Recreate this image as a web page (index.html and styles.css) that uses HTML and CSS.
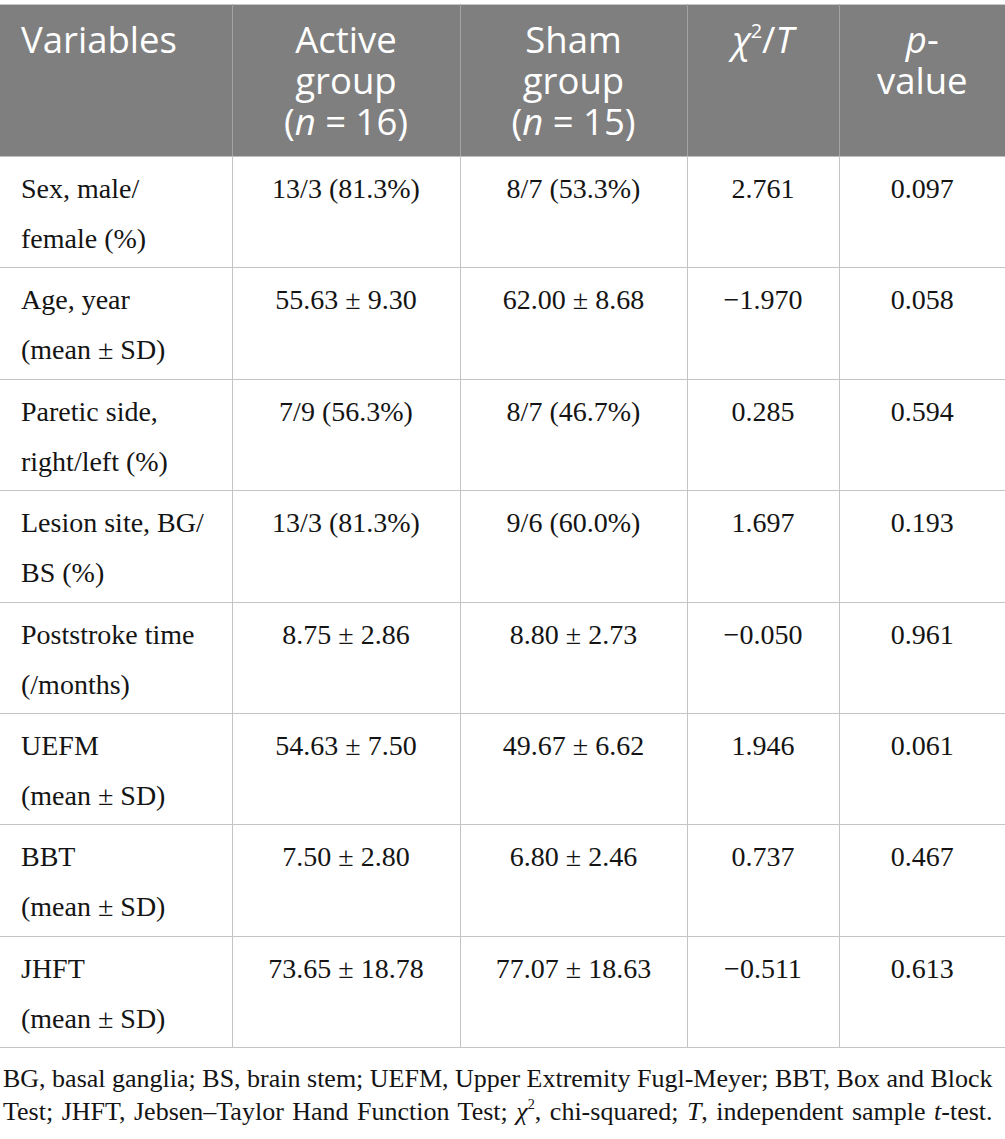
FILE: index.html
```html
<!DOCTYPE html>
<html lang="en">
<head>
<meta charset="utf-8">
<title>Table</title>
<link rel="stylesheet" href="styles.css">
</head>
<body>
<table class="data">
  <colgroup>
    <col class="c1"><col class="c2"><col class="c3"><col class="c4"><col class="c5">
  </colgroup>
  <thead>
    <tr>
      <th class="left">Variables</th>
      <th>Active<br>group<br>(<i>n</i> = 16)</th>
      <th>Sham<br>group<br>(<i>n</i> = 15)</th>
      <th><i>χ</i><sup>2</sup>/<i>T</i></th>
      <th><i>p</i>-<br>value</th>
    </tr>
  </thead>
  <tbody>
    <tr><td class="left">Sex, male/<br>female (%)</td><td>13/3 (81.3%)</td><td>8/7 (53.3%)</td><td>2.761</td><td>0.097</td></tr>
    <tr><td class="left">Age, year<br>(mean ± SD)</td><td>55.63 ± 9.30</td><td>62.00 ± 8.68</td><td>−1.970</td><td>0.058</td></tr>
    <tr><td class="left">Paretic side,<br>right/left (%)</td><td>7/9 (56.3%)</td><td>8/7 (46.7%)</td><td>0.285</td><td>0.594</td></tr>
    <tr><td class="left">Lesion site, BG/<br>BS (%)</td><td>13/3 (81.3%)</td><td>9/6 (60.0%)</td><td>1.697</td><td>0.193</td></tr>
    <tr><td class="left">Poststroke time<br>(/months)</td><td>8.75 ± 2.86</td><td>8.80 ± 2.73</td><td>−0.050</td><td>0.961</td></tr>
    <tr><td class="left">UEFM<br>(mean ± SD)</td><td>54.63 ± 7.50</td><td>49.67 ± 6.62</td><td>1.946</td><td>0.061</td></tr>
    <tr><td class="left">BBT<br>(mean ± SD)</td><td>7.50 ± 2.80</td><td>6.80 ± 2.46</td><td>0.737</td><td>0.467</td></tr>
    <tr><td class="left">JHFT<br>(mean ± SD)</td><td>73.65 ± 18.78</td><td>77.07 ± 18.63</td><td>−0.511</td><td>0.613</td></tr>
  </tbody>
</table>
<p class="note">BG, basal ganglia; BS, brain stem; UEFM, Upper Extremity Fugl-Meyer; BBT, Box and Block<br><span class="note-wide">Test; JHFT, Jebsen–Taylor Hand Function Test; <i>χ</i><sup>2</sup>, chi-squared; <i>T</i>, independent sample <i>t</i>-test.</span></p>
</body>
</html>
```
FILE: styles.css
```css
html, body {
  margin: 0;
  padding: 0;
  background: #ffffff;
}

body {
  padding-top: 4px;
  width: 1005px;
  overflow: hidden;
}

.data {
  width: 1005px;
  table-layout: fixed;
  border-collapse: collapse;
  border-spacing: 0;
}

.c1 { width: 232px; }
.c2 { width: 228px; }
.c3 { width: 227px; }
.c4 { width: 152px; }
.c5 { width: 166px; }

.data th {
  background: #7f7f7f;
  color: #ffffff;
  font-family: "Open Sans", sans-serif;
  font-weight: 400;
  font-size: 36.5px;
  line-height: 41px;
  padding: 14px 8px 14px 8px;
  text-align: center;
  vertical-align: top;
  border-top: 1px solid #c8c8c8;
  border-bottom: 1px solid #bdbdbd;
  border-left: 1px solid #a3a3a3;
  border-right: 1px solid #a3a3a3;
}

.data th:first-child,
.data td:first-child {
  border-left: none;
}

.data th:last-child,
.data td:last-child {
  border-right: none;
}

.data th.left {
  text-align: left;
  padding-left: 21px;
}

.data th sup {
  font-size: 0.55em;
  line-height: 0;
  vertical-align: 0.75em;
}

.data td {
  font-family: "Liberation Serif", "Times New Roman", serif;
  font-size: 28px;
  line-height: 50px;
  color: #141414;
  padding: 7px 8px 3.375px 8px;
  text-align: center;
  vertical-align: top;
  border: 1px solid #c4c4c4;
  white-space: nowrap;
}

.data td.left {
  text-align: left;
  padding-left: 21px;
}

.note {
  margin: 14px 0 0 0;
  padding-left: 3px;
  font-family: "Liberation Serif", "Times New Roman", serif;
  font-size: 26px;
  line-height: 33px;
  color: #141414;
  white-space: nowrap;
}

.note-wide {
  word-spacing: 2px;
}

.note sup {
  font-size: 0.55em;
  line-height: 0;
  vertical-align: 0.8em;
}
```
